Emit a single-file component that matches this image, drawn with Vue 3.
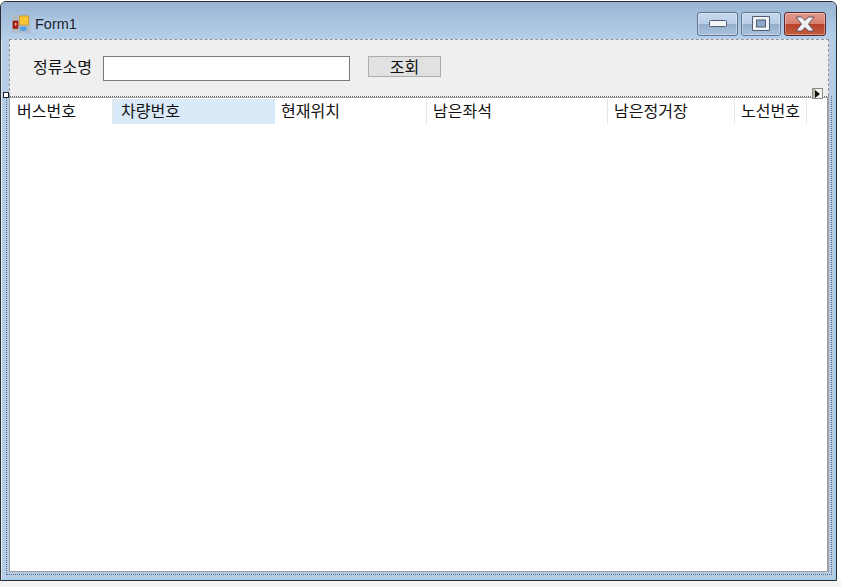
<script setup>
const cols = [
  { name: '버스번호', w: 103, pad: 7 },
  { name: '차량번호', w: 162, pad: 8, selected: true },
  { name: '현재위치', w: 152, pad: 6 },
  { name: '남은좌석', w: 181, pad: 6 },
  { name: '남은정거장', w: 127, pad: 6 },
  { name: '노선번호', w: 72, pad: 6 },
]
</script>

<template>
  <div class="page">
    <div class="window">
      <div class="titlebar">
        <svg class="appicon" width="18" height="18" viewBox="0 0 18 18">
          <rect x="0" y="0" width="18" height="18" fill="#b2bac6" />
          <rect x="1" y="6" width="5" height="7.500" fill="#b01c10" stroke="#7c1a12" stroke-width="0.6" />
          <rect x="3" y="8" width="1.400" height="2.400" fill="#f4d6c0" />
          <rect x="7.500" y="1" width="9" height="9" fill="#f7c531" stroke="#c7962a" stroke-width="0.8" />
          <rect x="8" y="11.700" width="6.700" height="4.300" fill="#4f9be8" stroke="#8fb9e6" stroke-width="0.6" />
        </svg>
        <span class="title">Form1</span>
        <div class="caption">
          <div class="cbtn min">
            <svg width="18" height="9" viewBox="0 0 18 9"><rect x="0.500" y="1.500" width="17" height="6" rx="1" fill="#f4f5f7" stroke="#4f5e74" /></svg>
          </div>
          <div class="cbtn max">
            <svg width="18" height="15" viewBox="0 0 18 15"><path fill="#f2f3f6" stroke="#4f5e74" d="M0.500 0.500h17v14h-17z" /><rect x="4.500" y="4" width="9" height="7" fill="#8ba8c8" stroke="#4f5e74" /></svg>
          </div>
          <div class="cbtn close">
            <svg width="20" height="16" viewBox="0 0 20 16"><path fill="#f2f2f4" stroke="#5a4858" stroke-width="0.9" stroke-linejoin="round" d="M1 1h5.500L10 4.500 13.500 1H19l-5.500 7L19 15h-5.500L10 11.500 6.500 15H1l5.500-7z" /></svg>
          </div>
        </div>
      </div>
      <div class="client">
        <div class="panel">
          <span class="label">정류소명</span>
          <div class="textbox"></div>
          <div class="button">조회</div>
        </div>
        <div class="gridwrap">
          <div class="grid">
            <div class="header">
              <div
                v-for="c in cols"
                :key="c.name"
                class="cell"
                :class="{ selected: c.selected }"
                :style="{ width: c.w + 'px', paddingLeft: c.pad + 'px' }"
              >{{ c.name }}</div>
            </div>
          </div>
        </div>
        <div class="handle"></div>
        <div class="smart">
          <svg width="5" height="8" viewBox="0 0 5 8"><path d="M0 0l5 4L0 8z" fill="#111" /></svg>
        </div>
      </div>
    </div>
  </div>
</template>

<style>
html, body { margin: 0; padding: 0; background: #fff; }
</style>

<style scoped>
.page {
  width: 841px;
  height: 587px;
  overflow: hidden;
  background: #fff;
  font-family: "Noto Sans CJK KR", "Liberation Sans", sans-serif;
  box-sizing: border-box;
  padding-top: 1px;
  position: relative;
}
.page::after {
  content: "";
  position: absolute;
  left: 0;
  right: 0;
  top: 581px;
  bottom: 0;
  background: #f3f3f3;
}
.window {
  width: 837px;
  height: 580px;
  box-sizing: border-box;
  border: 1px solid #2a2c30;
  border-top-left-radius: 6px;
  border-top-right-radius: 6px;
  background: #b4cce6;
  box-shadow: inset 1px 1px 0 #dfe9f4, inset -1px -1px 0 #8fd0ee;
  display: flex;
  flex-direction: column;
}
.titlebar {
  height: 37px;
  flex: none;
  display: flex;
  align-items: center;
  padding: 6px 10px 0 11px;
  box-sizing: border-box;
  background: linear-gradient(#99b5d3, #b5cfea);
  border-top-left-radius: 5px;
  border-top-right-radius: 5px;
}
.appicon { flex: none; }
.title {
  margin-left: 5px;
  font-family: "Liberation Sans", sans-serif;
  font-size: 14.5px;
  color: #1a2330;
  text-shadow: 0 0 6px rgba(235, 244, 252, 0.8);
}
.caption {
  margin-left: auto;
  display: flex;
  gap: 3px;
}
.cbtn {
  width: 41px;
  height: 24px;
  box-sizing: border-box;
  border: 1px solid #5f7690;
  border-radius: 3px;
  display: flex;
  align-items: center;
  justify-content: center;
  background: linear-gradient(#c6d8ec 0, #b8cee6 48%, #94aecb 52%, #a9c1db 100%);
  box-shadow: inset 0 0 0 1px rgba(255, 255, 255, 0.35);
}
.max { width: 40px; }
.close {
  width: 42px;
  border-color: #5a2a30;
  background: linear-gradient(#e2998c 0, #d6806e 48%, #b9412a 52%, #c25c3e 100%);
}
.client {
  position: relative;
  flex: 1;
  min-height: 0;
  display: flex;
  flex-direction: column;
}
.panel {
  height: 57px;
  flex: none;
  box-sizing: border-box;
  margin: 0 7px 0 8px;
  border: 1px dashed #8f9296;
  border-bottom: 0;
  background: #efefef;
  display: flex;
  align-items: flex-start;
  padding: 16px 0 0 23px;
  font-size: 16px;
  color: #111;
}
.label { width: 70px; flex: none; line-height: 20px; }
.textbox {
  width: 247px;
  height: 25px;
  box-sizing: border-box;
  background: #fff;
  border: 1px solid #7a7a7a;
  flex: none;
}
.button {
  margin-left: 18px;
  width: 73px;
  height: 21px;
  box-sizing: border-box;
  padding-bottom: 2px;
  background: #e1e1e1;
  border: 1px solid #adadad;
  display: flex;
  align-items: center;
  justify-content: center;
}
.gridwrap {
  flex: 1;
  min-height: 0;
  box-sizing: border-box;
  margin: 0 4px 5px 5px;
  padding: 0 2px 2px 2px;
  border-left: 1px dotted #5a6c8a;
  border-right: 1px dotted #5a6c8a;
  border-bottom: 1px dotted #5a6c8a;
  display: flex;
}
.grid {
  flex: 1;
  min-width: 0;
  background: #fff;
  border-top: 1px dotted #66686c;
  border-left: 1px solid #a0a0a0;
  border-bottom: 1px solid #a0a0a0;
  border-right: 2px solid #a0a0a0;
  box-sizing: border-box;
  box-shadow: inset 0 1px 0 #a4a4a4;
  padding-top: 2px;
}
.header {
  display: flex;
  height: 25px;
}
.cell {
  flex: none;
  box-sizing: border-box;
  height: 25px;
  line-height: 22px;
  font-size: 16px;
  color: #111;
  border-right: 1px solid #e6e6e6;
  white-space: nowrap;
}
.cell.selected {
  background: #d9e9f7;
  border-right-color: #d9e9f7;
}
.handle {
  position: absolute;
  left: 2px;
  top: 53px;
  width: 6px;
  height: 6px;
  box-sizing: border-box;
  background: #fff;
  border: 1px solid #222;
}
.smart {
  position: absolute;
  left: 811px;
  top: 49px;
  width: 11px;
  height: 11px;
  box-sizing: border-box;
  background: linear-gradient(90deg, #b9b9b0 0 2px, #f2f2ee 2px);
  border: 1px solid #8b8b84;
  display: flex;
  align-items: center;
  justify-content: center;
}
</style>
